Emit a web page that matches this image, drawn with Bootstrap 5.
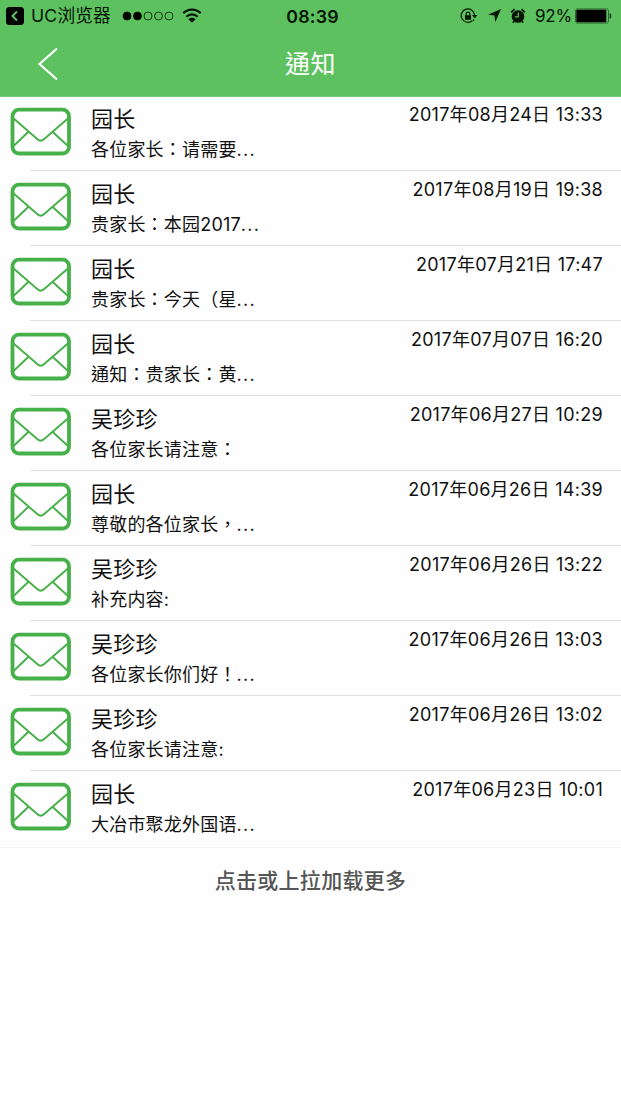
<!DOCTYPE html>
<html lang="zh-TW">
<head>
<meta charset="utf-8">
<meta name="viewport" content="width=device-width, initial-scale=1">
<title>通知</title>
<link rel="stylesheet" href="https://cdn.jsdelivr.net/npm/bootstrap@5.3.0/dist/css/bootstrap.min.css">
<style>
body{font-family:Inter,"Noto Sans CJK TC","Noto Sans CJK SC",sans-serif;color:#111;background:#fefefe;min-height:1104px}
svg{display:block;flex:none}
.top{background:#5dc15f;height:97px;border-bottom:1px solid #7cc77e}
.status{height:31px;color:#041504;font-size:17px;line-height:31px;padding-left:6px;padding-right:9px}
.side{flex:1 1 0}
.uc{font-size:17.700px;letter-spacing:.15px;margin-left:7px}
.dots{margin-left:10px}
.wifi{margin-left:7px}
.clock{font-weight:600;font-size:17.800px;letter-spacing:.2px;padding-left:7px;padding-top:1px}
.arrow{margin-left:10px}
.alarm{margin-left:9px}
.pct{margin-left:9px;font-size:17px;letter-spacing:-.2px;width:37px;padding-top:1px}
.battery{margin-left:3px}
.titlebar{height:65px;padding-left:37px;padding-right:37px}
.titlebar h1{font-size:25px;line-height:36px;letter-spacing:.4px;font-weight:400}
.notice{height:75px;padding:0 18px 0 10px}
.notice+.notice{background:linear-gradient(#dfdfdf,#dfdfdf) 30px 0/100% 1px no-repeat}
.list{margin-top:-2px;border-bottom:1px solid #f3f3f3;padding-bottom:2px}
.envelope{margin-top:12px;margin-right:20px}
.who{font-size:22px;line-height:30px;margin-top:9px;letter-spacing:.2px}
.text{font-size:18px;line-height:30px;letter-spacing:.2px;margin-top:1px}
.dot3{letter-spacing:1.250px}
.when{font-size:18px;line-height:28px;margin-top:6px;letter-spacing:.28px}
.more{color:#555;font-size:21px;line-height:30px;margin-top:18px;letter-spacing:.3px;font-weight:500}
</style>
</head>
<body>
<svg width="0" height="0" class="position-absolute" aria-hidden="true">
  <symbol id="mail" viewBox="0 0 61 49">
    <g fill="none" stroke="#46b149" stroke-linejoin="round">
      <rect x="2.500" y="2.700" width="56.500" height="43.800" rx="6.500" stroke-width="3.800"/>
      <path d="M3 11 27.500 32.300q3.200 2.800 6.400 0L58.500 11M3 39.500 18.500 24.700M58.500 39.500 42.500 24.700" stroke-width="1.900"/>
    </g>
  </symbol>
</svg>
<header class="top">
  <div class="status d-flex align-items-center">
    <div class="side d-flex align-items-center">
      <svg width="18" height="18" viewBox="0 0 18 18"><rect width="18" height="18" rx="3.500" fill="#000"/><path d="M11 4.500 6.500 9l4.500 4.500" fill="none" stroke="#5dc15f" stroke-width="2"/></svg>
      <span class="uc text-nowrap">UC浏览器</span>
      <svg class="dots" width="54" height="12" viewBox="0 0 54 12"><g stroke="#041504" stroke-width=".8"><circle cx="6" cy="6" r="4"/><circle cx="16.500" cy="6" r="4"/><g fill="none"><circle cx="27" cy="6" r="4"/><circle cx="37.500" cy="6" r="4"/><circle cx="48" cy="6" r="4"/></g></g></svg>
      <svg class="wifi" width="20" height="16" viewBox="0 0 20 16"><g fill="none" stroke="#041504" stroke-width="2.200"><path d="M1.300 5.100a12.500 12.500 0 0 1 17.400 0M4.400 8.700a8 8 0 0 1 11.200 0"/></g><path d="M6.500 11.200a5 5 0 0 1 7 0L10 14.700z" fill="#041504"/></svg>
    </div>
    <div class="clock">08:39</div>
    <div class="side d-flex align-items-center justify-content-end">
      <svg width="18" height="16" viewBox="0 0 18 16"><path d="M12.300 12.700a6.700 6.700 0 1 1 2.300-5.500M13 12.800a6.700 6.700 0 0 0 .9-1.200" fill="none" stroke="#041504" stroke-width="1.200"/><path d="M12 7h5.500l-2.700 3.200zM5 7.200h6v4.500H5z" fill="#041504"/><path d="M6.200 7.500V6a1.800 1.800 0 0 1 3.600 0v1.500" fill="none" stroke="#041504" stroke-width="1.200"/></svg>
      <svg class="arrow" width="13" height="13" viewBox="0 0 13 13"><path d="M13 0 7.300 13 6.500 6.500 0 5.700z" fill="#041504"/></svg>
      <svg class="alarm" width="16" height="16" viewBox="0 0 16 16"><circle cx="8" cy="8.500" r="6.300" fill="#041504"/><path d="M1.200 4.300 4.500 1.200M14.800 4.300 11.500 1.200M4 13 3 14.700M12 13l1 1.700" stroke="#041504" stroke-width="1.700"/><path d="M8.300 4.500v4.400H4.800" fill="none" stroke="#5dc15f" stroke-width="1.200"/></svg>
      <span class="pct text-nowrap">92%</span>
      <svg class="battery" width="37" height="16" viewBox="0 0 37 16"><rect x=".5" y=".9" width="33" height="14.200" rx="2" fill="none" stroke="#254f26" stroke-width=".8"/><rect x="1.300" y="1.700" width="30" height="12.600" rx="1" fill="#000"/><path d="M35 5.500q2 2.500 0 5z" fill="#041504" stroke="#041504" stroke-width=".5"/></svg>
    </div>
  </div>
  <div class="titlebar d-flex align-items-center justify-content-between text-white">
    <svg width="24" height="34" viewBox="0 0 24 34"><path d="M20 1.500 2.500 17 20 32.500" fill="none" stroke="#fff" stroke-width="2.200"/></svg>
    <h1 class="m-0">通知</h1>
    <span class="px-2 mx-1"></span>
  </div>
</header>
<main>
  <div class="list">
    <div class="notice d-flex"><svg class="envelope" width="61" height="49"><use href="#mail"/></svg><div class="flex-grow-1"><div class="who">园长</div><div class="text">各位家长：请需要<span class="dot3">...</span></div></div><div class="when">2017年08月24日 13:33</div></div>
    <div class="notice d-flex"><svg class="envelope" width="61" height="49"><use href="#mail"/></svg><div class="flex-grow-1"><div class="who">园长</div><div class="text">贵家长：本园2017<span class="dot3">...</span></div></div><div class="when">2017年08月19日 19:38</div></div>
    <div class="notice d-flex"><svg class="envelope" width="61" height="49"><use href="#mail"/></svg><div class="flex-grow-1"><div class="who">园长</div><div class="text">贵家长：今天（星<span class="dot3">...</span></div></div><div class="when">2017年07月21日 17:47</div></div>
    <div class="notice d-flex"><svg class="envelope" width="61" height="49"><use href="#mail"/></svg><div class="flex-grow-1"><div class="who">园长</div><div class="text">通知：贵家长：黄<span class="dot3">...</span></div></div><div class="when">2017年07月07日 16:20</div></div>
    <div class="notice d-flex"><svg class="envelope" width="61" height="49"><use href="#mail"/></svg><div class="flex-grow-1"><div class="who">吴珍珍</div><div class="text">各位家长请注意：</div></div><div class="when">2017年06月27日 10:29</div></div>
    <div class="notice d-flex"><svg class="envelope" width="61" height="49"><use href="#mail"/></svg><div class="flex-grow-1"><div class="who">园长</div><div class="text">尊敬的各位家长，<span class="dot3">...</span></div></div><div class="when">2017年06月26日 14:39</div></div>
    <div class="notice d-flex"><svg class="envelope" width="61" height="49"><use href="#mail"/></svg><div class="flex-grow-1"><div class="who">吴珍珍</div><div class="text">补充内容:</div></div><div class="when">2017年06月26日 13:22</div></div>
    <div class="notice d-flex"><svg class="envelope" width="61" height="49"><use href="#mail"/></svg><div class="flex-grow-1"><div class="who">吴珍珍</div><div class="text">各位家长你们好！<span class="dot3">...</span></div></div><div class="when">2017年06月26日 13:03</div></div>
    <div class="notice d-flex"><svg class="envelope" width="61" height="49"><use href="#mail"/></svg><div class="flex-grow-1"><div class="who">吴珍珍</div><div class="text">各位家长请注意:</div></div><div class="when">2017年06月26日 13:02</div></div>
    <div class="notice d-flex"><svg class="envelope" width="61" height="49"><use href="#mail"/></svg><div class="flex-grow-1"><div class="who">园长</div><div class="text">大冶市聚龙外国语<span class="dot3">...</span></div></div><div class="when">2017年06月23日 10:01</div></div>
  </div>
  <div class="more text-center">点击或上拉加载更多</div>
</main>
<script src="https://cdn.jsdelivr.net/npm/bootstrap@5.3.0/dist/js/bootstrap.bundle.min.js"></script>
</body>
</html>
